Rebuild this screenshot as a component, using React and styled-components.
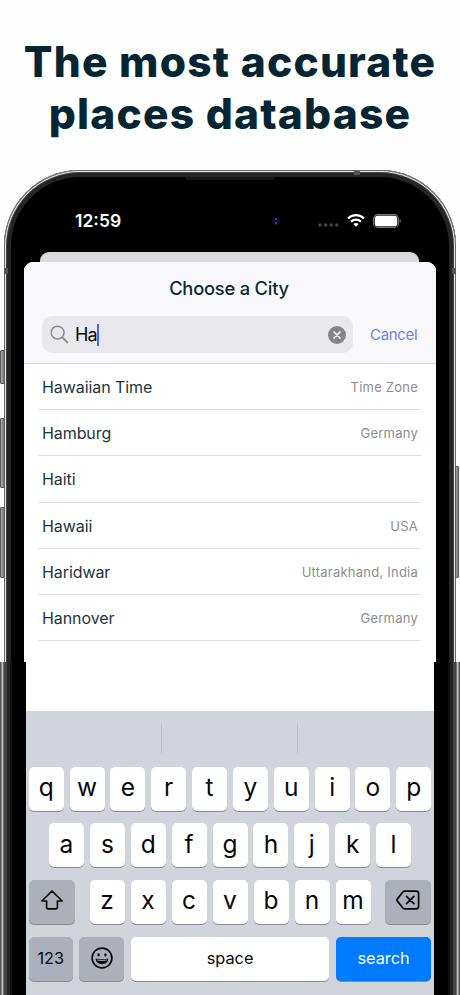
import React from 'react'
import styled, { createGlobalStyle, css } from 'styled-components'

const GlobalStyle = createGlobalStyle`
  * {
    box-sizing: border-box;
  }

  body {
    margin: 0;
    background-color: #fefefe;
    font-family: Inter, 'Liberation Sans', sans-serif;
  }
`

const Page = styled.main`
  width: 460px;
  height: 995px;
  display: flex;
  flex-direction: column;
  overflow: hidden;
`

const Headline = styled.h1`
  height: 170px;
  margin: 0;
  padding-top: 36px;
  color: #052533;
  font-size: 42.5px;
  font-weight: 800;
  line-height: 51.5px;
  letter-spacing: 1.2px;
  text-align: center;
  white-space: nowrap;
`

const PhoneTop = styled.div`
  position: relative;
  height: 492px;
  padding: 0 4px;
  overflow: hidden;
`

const Shell = styled.div`
  height: 640px;
  padding: 0 20px;
  background-color: #000;
  border-radius: 76px 76px 0 0;
  box-shadow: inset 0 0 0 1px #6a6a68, inset 0 0 0 2px #e4e4e1,
    inset 0 0 0 3px #444, inset 0 0 0 7px #252525;
`

const SideButton = styled.i`
  position: absolute;
  top: ${props => props.top}px;
  ${props => props.side}: ${props => (props.side === 'left' ? 0 : 1)}px;
  width: ${props => (props.side === 'left' ? 5 : 4)}px;
  height: ${props => props.height}px;
  background: linear-gradient(90deg, #a5a6a4, #777876);
  border: 1px solid #5c5d5b;
  border-radius: 1px;
`

const Antenna = styled.i`
  position: absolute;
  left: ${props => props.x}px;
  top: ${props => props.y}px;
  width: ${props => props.w}px;
  height: ${props => props.h}px;
  background-color: #555;
`

const Speaker = styled.i`
  position: absolute;
  top: 7px;
  left: 185px;
  width: 90px;
  height: 3px;
  background-color: #181818;
  border-radius: 0 0 3px 3px;
`

const StatusBar = styled.div`
  height: 82px;
  padding: 19px 35px 0 51px;
  display: flex;
  align-items: center;
  color: #fff;
`

const Clock = styled.span`
  flex: 1;
  font-size: 17.5px;
  font-weight: 600;
`

const Camera = styled.svg`
  margin-right: 37px;
`

const Signal = styled.svg`
  margin: 9px 8px 0 0;
`

const Wifi = styled.svg`
  margin-right: 8px;
`

const BackSheet = styled.div`
  height: 10px;
  margin: 0 17px 0 16px;
  background-color: #dadadd;
  border-radius: 9px 9px 0 0;
`

const Sheet = styled.section`
  height: 400px;
  background-color: #fff;
  border-radius: 9px 9px 0 0;
  overflow: hidden;
`

const SheetHeader = styled.header`
  height: 102px;
  background-color: #f9f8fd;
  border-bottom: 1px solid #d2d2d6;
`

const SheetTitle = styled.h2`
  margin: 0;
  padding: 14px 2px 0 0;
  color: #0b2a35;
  font-size: 18.3px;
  font-weight: 500;
  line-height: 24px;
  letter-spacing: -0.2px;
  text-align: center;
`

const SearchRow = styled.div`
  display: flex;
  align-items: center;
  margin-top: 16px;
  padding: 0 18px;
`

const SearchField = styled.div`
  flex: none;
  width: 311px;
  height: 37px;
  padding: 0 7px 0 8px;
  display: flex;
  align-items: center;
  background-color: #e9e8ed;
  border-radius: 10px;
`

const Query = styled.span`
  flex: 1;
  display: flex;
  align-items: center;
  margin-left: 6px;
  color: #050505;
  font-size: 18px;
  letter-spacing: -0.8px;
`

const Caret = styled.i`
  width: 2px;
  height: 22px;
  background-color: #4c64e2;
`

const Cancel = styled.span`
  margin-left: 17px;
  color: #6c83ee;
  font-size: 15px;
  letter-spacing: -0.3px;
`

const List = styled.ul`
  margin: 0;
  padding: 0 15px 0 14px;
  list-style: none;
`

const City = styled.li`
  height: 46.2px;
  padding: 1px 3px 0 4px;
  display: flex;
  align-items: center;
  justify-content: space-between;
  border-bottom: 1px solid #dfdfdf;
`

const CityName = styled.span`
  color: #1b3641;
  font-size: 16px;
  letter-spacing: -0.08px;
`

const Region = styled.span`
  color: #8b8e90;
  font-size: 13px;
  letter-spacing: 0.23px;
`

const PhoneBottom = styled.div`
  flex: 1;
  display: flex;
`

const Edge = styled.div`
  width: 26px;
  background: linear-gradient(
    90deg,
    #555 0 1px,
    #8d8d8d 1px 2px,
    #c4c4c4 2px 3px,
    #6f6f6f 3px 4px,
    #444 4px 7px,
    #242424 7px 10px,
    #111 10px 12px,
    #000 12px
  );
  ${props => props.flip && css`
    transform: scaleX(-1);
  `}
`

const Screen = styled.div`
  width: 408px;
  background-color: #fff;
`

const Keyboard = styled.div`
  height: 284px;
  margin-top: 49px;
  background-color: #d1d4da;
`

const Suggestions = styled.div`
  height: 55.5px;
  padding: 13px 0 14px;
  display: grid;
  grid-template-columns: 136px 136px 136px;
`

const Suggestion = styled.span`
  border-right: ${props => (props.last ? 0 : 1)}px solid #bcbfc4;
`

const KeyRow = styled.div`
  height: 44.5px;
  margin-bottom: 12.2px;
  padding: 0 ${props => props.inset || 2.7}px;
  display: flex;
  justify-content: space-between;
`

const Letters = styled.div`
  display: flex;
  gap: 6px;
`

const Key = styled.div`
  width: ${props => props.width || 35}px;
  height: 44px;
  padding-bottom: ${props => (props.small ? 1 : 3)}px;
  display: flex;
  align-items: center;
  justify-content: center;
  color: ${props => (props.blue ? '#fff' : '#080808')};
  background-color: ${props => (props.blue ? '#007aff' : props.dark ? '#abb0ba' : '#fff')};
  border-radius: 5px;
  box-shadow: 0 1px 0 #898b8f;
  font-size: ${props => (props.small ? 16.3 : 24.5)}px;
  font-weight: 400;
`

const cities = [
  ['Hawaiian Time', 'Time Zone'],
  ['Hamburg', 'Germany'],
  ['Haiti', ''],
  ['Hawaii', 'USA'],
  ['Haridwar', 'Uttarakhand, India'],
  ['Hannover', 'Germany']
]

const renderKeys = letters => letters.split('').map(letter => <Key key={letter}>{letter}</Key>)

const StatusIcons = () => (
  <>
    <Camera width="10" height="10" viewBox="0 0 10 10">
      <circle cx="5" cy="5" r="4" fill="#12102c" />
      <circle cx="5" cy="3" r="1" fill="#4b43a5" />
      <circle cx="5" cy="7" r="1" fill="#4b43a5" />
    </Camera>
    <Signal width="21" height="4" viewBox="0 0 21 4" fill="#454545">
      <circle cx="2" cy="2" r="1.8" />
      <circle cx="7.6" cy="2" r="1.8" />
      <circle cx="13.2" cy="2" r="1.8" />
      <circle cx="18.8" cy="2" r="1.8" />
    </Signal>
    <Wifi width="18" height="13" viewBox="0 0 18 13" fill="none" stroke="#fff" strokeWidth="2.2">
      <path d="M1 4.5C5.5.1 12.5.1 17 4.5" />
      <path d="M4 7.6c2.8-2.7 7.2-2.7 10 0" />
      <path d="M9 12.8 6.3 10c1.5-1.4 3.9-1.4 5.4 0z" fill="#fff" stroke="none" />
    </Wifi>
    <svg width="28" height="14" viewBox="0 0 28 14">
      <rect x=".6" y=".6" width="24.8" height="12.8" rx="4" fill="none" stroke="#777" strokeWidth="1.1" />
      <rect x="1.8" y="1.8" width="22.4" height="10.4" rx="2.8" fill="#fff" />
      <path d="M26.6 4.8c1.5.8 1.5 3.6 0 4.4z" fill="#777" />
    </svg>
  </>
)

export default function App() {
  return (
    <Page>
      <GlobalStyle />
      <Headline>
        The most accurate
        <br />
        places database
      </Headline>
      <PhoneTop>
        <SideButton side="left" top={180} height={34} />
        <SideButton side="left" top={248} height={70} />
        <SideButton side="left" top={337} height={71} />
        <SideButton side="right" top={296} height={112} />
        <Shell>
          <StatusBar>
            <Clock>12:59</Clock>
            <StatusIcons />
          </StatusBar>
          <BackSheet />
          <Sheet>
            <SheetHeader>
              <SheetTitle>Choose a City</SheetTitle>
              <SearchRow>
                <SearchField>
                  <svg width="19" height="19" viewBox="0 0 19 19" fill="none" stroke="#8b8b90" strokeLinecap="round">
                    <circle cx="7.6" cy="7.6" r="6.4" strokeWidth="1.5" />
                    <path d="m12.4 12.4 5 5" strokeWidth="1.9" />
                  </svg>
                  <Query>
                    Ha
                    <Caret />
                  </Query>
                  <svg width="18" height="18" viewBox="0 0 18 18">
                    <circle cx="9" cy="9" r="9" fill="#858489" />
                    <path d="m5.9 5.9 6.2 6.2m0-6.2-6.2 6.2" stroke="#f1f0f4" strokeWidth="1.6" strokeLinecap="round" />
                  </svg>
                </SearchField>
                <Cancel>Cancel</Cancel>
              </SearchRow>
            </SheetHeader>
            <List>
              {cities.map(([name, region]) => (
                <City key={name}>
                  <CityName>{name}</CityName>
                  <Region>{region}</Region>
                </City>
              ))}
            </List>
          </Sheet>
        </Shell>
        <Speaker />
        <Antenna x={354} y={1} w={6} h={4} />
        <Antenna x={4} y={98} w={4} h={6} />
        <Antenna x={452} y={98} w={4} h={6} />
      </PhoneTop>
      <PhoneBottom>
        <Edge />
        <Screen>
          <Keyboard>
            <Suggestions>
              <Suggestion />
              <Suggestion />
              <Suggestion last />
            </Suggestions>
            <KeyRow>{renderKeys('qwertyuiop')}</KeyRow>
            <KeyRow inset={23}>{renderKeys('asdfghjkl')}</KeyRow>
            <KeyRow>
              <Key dark width={46}>
                <svg width="24" height="22" viewBox="0 0 24 22" fill="none" stroke="#080808" strokeWidth="1.7" strokeLinejoin="round">
                  <path d="M12 2 1.8 12h4.8v6.6q0 1.2 1.2 1.2h8.4q1.2 0 1.2-1.2V12h4.8z" />
                </svg>
              </Key>
              <Letters>{renderKeys('zxcvbnm')}</Letters>
              <Key dark width={46}>
                <svg width="24" height="20" viewBox="0 0 24 20" fill="none" stroke="#080808" strokeWidth="1.7" strokeLinecap="round" strokeLinejoin="round">
                  <path d="M8.7 1.2h11.4q2.5 0 2.5 2.5v12.6q0 2.5-2.5 2.5H8.7q-1 0-1.8-.8L1.6 11.4q-1.3-1.4 0-2.8L6.9 2q.8-.8 1.8-.8z" />
                  <path d="m10.5 6.3 7.4 7.4m0-7.4-7.4 7.4" />
                </svg>
              </Key>
            </KeyRow>
            <KeyRow>
              <Key dark small width={44}>123</Key>
              <Key dark small width={45}>
                <svg width="22" height="22" viewBox="0 0 22 22">
                  <circle cx="11" cy="11" r="9.9" fill="none" stroke="#080808" strokeWidth="1.7" />
                  <ellipse cx="7.6" cy="7.8" rx="1.2" ry="1.6" fill="#080808" />
                  <ellipse cx="14.4" cy="7.8" rx="1.2" ry="1.6" fill="#080808" />
                  <path d="M4.6 11.6q6.4 1.4 12.8 0c0 7.6-12.8 7.6-12.8 0z" fill="#080808" />
                  <path d="M6.2 13q4.8 1 9.6 0" fill="none" stroke="#abb0ba" strokeWidth="1" />
                </svg>
              </Key>
              <Key small width={198}>space</Key>
              <Key blue small width={95.5}>search</Key>
            </KeyRow>
          </Keyboard>
        </Screen>
        <Edge flip />
      </PhoneBottom>
    </Page>
  )
}
